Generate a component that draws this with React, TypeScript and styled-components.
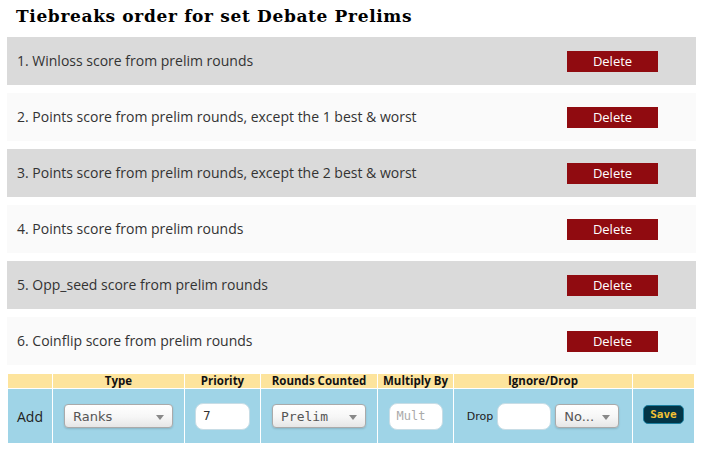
import React from "react";
import styled, { createGlobalStyle } from "styled-components";

const Global = createGlobalStyle`
  html, body { margin: 0; padding: 0; background: #ffffff; }
  body { font-family: "Open Sans", "DejaVu Sans", sans-serif; color: #333; }
  * { box-sizing: border-box; }
`;

const Page = styled.div`
  width: 703px;
  height: 453px;
  padding: 6px 7px 0 7px;
  overflow: hidden;
`;

const Title = styled.h2`
  margin: 0 0 10px 9px;
  font-family: "DejaVu Serif", "Liberation Serif", serif;
  font-weight: bold;
  font-size: 17px;
  line-height: 21px;
  letter-spacing: 0.65px;
  color: #000;
`;

const List = styled.div`
  display: flex;
  flex-direction: column;
  gap: 8px;
  width: 689px;
`;

const Row = styled.div<{ $alt: boolean }>`
  height: 48px;
  display: flex;
  align-items: center;
  justify-content: space-between;
  padding: 0 38px 1px 10px;
  background: ${(p) => (p.$alt ? "#fafafa" : "#dadada")};
  font-size: 14px;
  color: #333;
`;

const DeleteButton = styled.button`
  width: 91px;
  height: 21px;
  border: none;
  background: #900b10;
  color: #ffffff;
  font-family: "Open Sans", sans-serif;
  font-size: 13px;
  padding: 0;
  line-height: 21px;
  margin-top: 1px;
`;

const Table = styled.div`
  margin: 9px 0 0 1px;
  width: 686px;
  display: grid;
  grid-template-columns: 44px 131px 75px 116px 75px 178px 61px;
  grid-template-rows: 14px 54px;
  gap: 1px;
  background: #ffffff;
`;

const HeadCell = styled.div`
  background: #fde49d;
  display: flex;
  align-items: center;
  justify-content: center;
  font-family: "Open Sans", sans-serif;
  font-weight: bold;
  font-size: 11.5px;
  line-height: 14px;
  color: #111;
  white-space: nowrap;
`;

const BodyCell = styled.div`
  background: #9fd4e7;
  display: flex;
  align-items: center;
  justify-content: center;
  gap: 4px;
  font-size: 14px;
  color: #222;
`;

const SelectBox = styled.div<{ $w: number; $mono?: boolean }>`
  position: relative;
  width: ${(p) => p.$w}px;
  height: 24px;
  border: 1px solid #aaa;
  border-radius: 4px;
  background: linear-gradient(#ffffff 0%, #f6f6f6 55%, #e6e6e6 100%);
  box-shadow: 0 1px 2px rgba(0, 0, 0, 0.15);
  display: flex;
  align-items: center;
  padding-left: 8px;
  font-family: ${(p) => (p.$mono ? '"DejaVu Sans Mono", monospace' : '"DejaVu Sans", sans-serif')};
  font-size: 13px;
  color: #555;
`;

const Arrow = styled.span`
  position: absolute;
  right: 8px;
  top: 10px;
  width: 0;
  height: 0;
  border-left: 4px solid transparent;
  border-right: 4px solid transparent;
  border-top: 5px solid #888;
`;

const TextBox = styled.div<{ $w: number; $mono?: boolean; $placeholder?: boolean }>`
  width: ${(p) => p.$w}px;
  height: 27px;
  border-radius: 8px;
  background: #ffffff;
  border: 1px solid #c8dde6;
  display: flex;
  align-items: center;
  padding-left: 7px;
  font-family: ${(p) => (p.$mono ? '"DejaVu Sans Mono", monospace' : '"DejaVu Sans", sans-serif')};
  font-size: 12px;
  color: ${(p) => (p.$placeholder ? "#aaa" : "#333")};
`;

const DropLabel = styled.span`
  font-family: "DejaVu Sans", sans-serif;
  font-size: 11px;
  color: #222;
`;

const SaveButton = styled.button`
  width: 41px;
  height: 19px;
  border: 1px solid #1b7fa0;
  border-radius: 5px;
  background: #023547;
  color: #f4c234;
  font-family: "DejaVu Sans Mono", monospace;
  font-weight: bold;
  font-size: 11px;
  padding: 0;
  line-height: 16px;
  margin-top: -3px;
`;

const rows = [
  "1. Winloss score from prelim rounds",
  "2. Points score from prelim rounds, except the 1 best & worst",
  "3. Points score from prelim rounds, except the 2 best & worst",
  "4. Points score from prelim rounds",
  "5. Opp_seed score from prelim rounds",
  "6. Coinflip score from prelim rounds",
];

export default function App() {
  return (
    <Page>
      <Global />
      <Title>Tiebreaks order for set Debate Prelims</Title>
      <List>
        {rows.map((r, i) => (
          <Row key={r} $alt={i % 2 === 1}>
            <span>{r}</span>
            <DeleteButton>Delete</DeleteButton>
          </Row>
        ))}
      </List>
      <Table>
        <HeadCell />
        <HeadCell>Type</HeadCell>
        <HeadCell>Priority</HeadCell>
        <HeadCell>Rounds Counted</HeadCell>
        <HeadCell>Multiply By</HeadCell>
        <HeadCell>Ignore/Drop</HeadCell>
        <HeadCell />
        <BodyCell>Add</BodyCell>
        <BodyCell>
          <SelectBox $w={109}>
            Ranks
            <Arrow />
          </SelectBox>
        </BodyCell>
        <BodyCell>
          <TextBox $w={55}>7</TextBox>
        </BodyCell>
        <BodyCell>
          <SelectBox $w={94} $mono>
            Prelim
            <Arrow />
          </SelectBox>
        </BodyCell>
        <BodyCell>
          <TextBox $w={54} $mono $placeholder>
            Mult
          </TextBox>
        </BodyCell>
        <BodyCell>
          <DropLabel>Drop</DropLabel>
          <TextBox $w={54} />
          <SelectBox $w={64}>
            No...
            <Arrow />
          </SelectBox>
        </BodyCell>
        <BodyCell>
          <SaveButton>Save</SaveButton>
        </BodyCell>
      </Table>
    </Page>
  );
}
